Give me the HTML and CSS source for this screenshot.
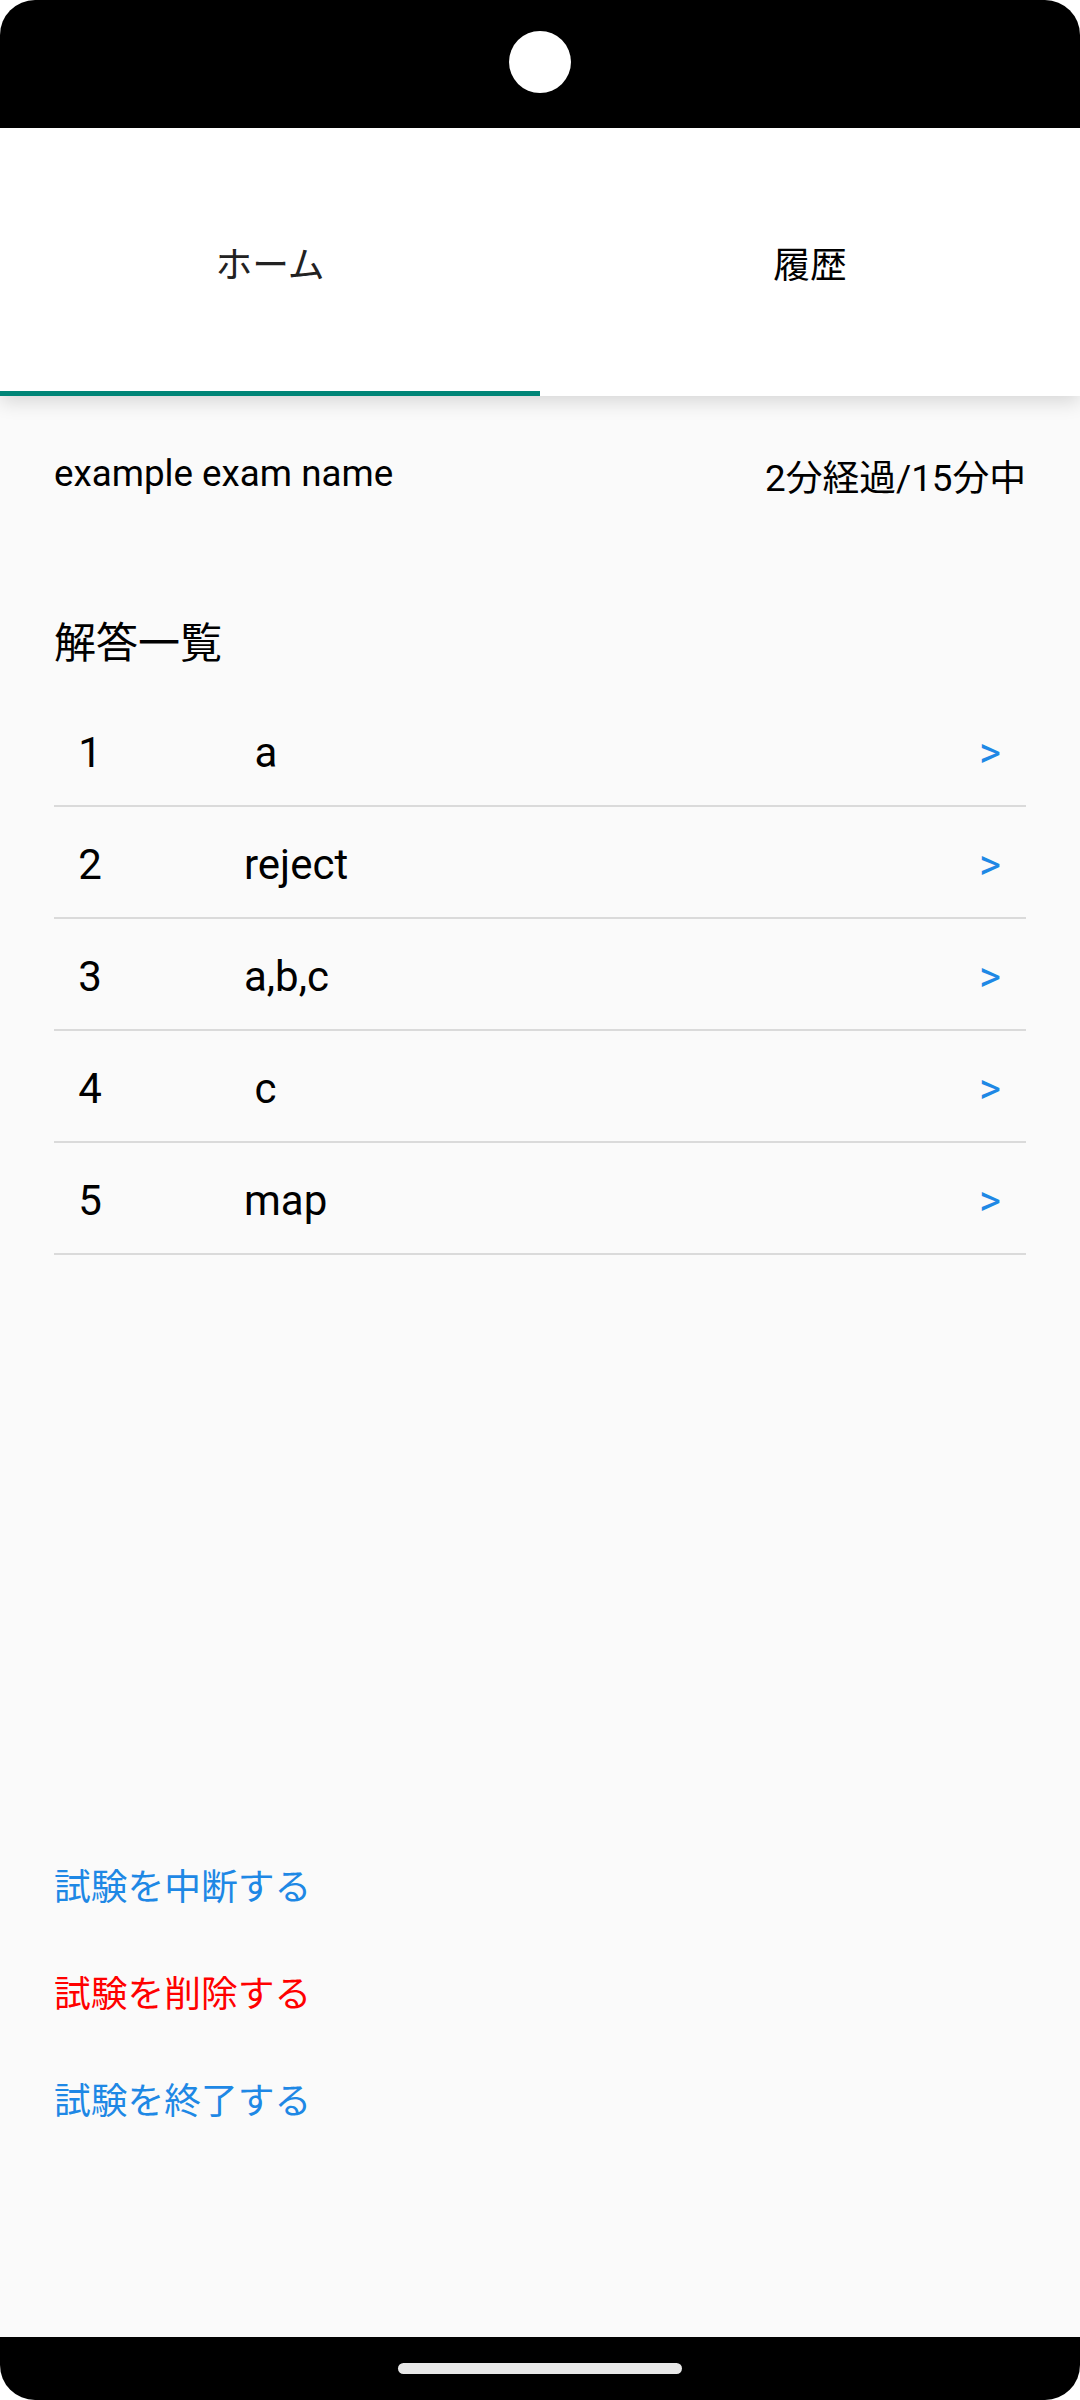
FILE: index.html
```html
<!DOCTYPE html>
<html lang="ja">
<head>
<meta charset="utf-8">
<title>試験</title>
<link rel="stylesheet" href="styles.css">
</head>
<body>
<div class="phone">
  <div class="statusbar"><div class="camera"></div></div>
  <nav class="tabs">
    <div class="tab tab-active">ホーム</div>
    <div class="tab">履歴</div>
  </nav>
  <main class="content">
    <div class="exam-row">
      <span class="exam-name">example exam name</span>
      <span class="exam-time">2分経過/15分中</span>
    </div>
    <h2 class="heading">解答一覧</h2>
    <ul class="answers">
      <li class="row"><span class="num">1</span><span class="ans"> a</span><span class="chev">&gt;</span></li>
      <li class="row"><span class="num">2</span><span class="ans">reject</span><span class="chev">&gt;</span></li>
      <li class="row"><span class="num">3</span><span class="ans">a,b,c</span><span class="chev">&gt;</span></li>
      <li class="row"><span class="num">4</span><span class="ans"> c</span><span class="chev">&gt;</span></li>
      <li class="row"><span class="num">5</span><span class="ans">map</span><span class="chev">&gt;</span></li>
    </ul>
    <div class="actions">
      <a class="action">試験を中断する</a>
      <a class="action action-danger">試験を削除する</a>
      <a class="action">試験を終了する</a>
    </div>
  </main>
  <div class="navbar"><div class="pill"></div></div>
</div>
</body>
</html>
```
FILE: styles.css
```css
* { box-sizing: border-box; }
html, body {
  margin: 0;
  padding: 0;
  background: #ffffff;
}
body {
  font-family: Roboto, "Noto Sans CJK JP", sans-serif;
  color: #000;
}
.phone {
  width: 1080px;
  height: 2400px;
  display: flex;
  flex-direction: column;
  overflow: hidden;
}
.statusbar {
  height: 128px;
  flex: 0 0 128px;
  background: #000;
  border-radius: 35px 35px 0 0;
  display: flex;
  justify-content: center;
  padding-top: 31px;
}
.camera {
  width: 62px;
  height: 62px;
  border-radius: 50%;
  background: #fff;
}
.tabs {
  flex: 0 0 268px;
  height: 268px;
  display: flex;
  background: #fff;
  position: relative;
  z-index: 2;
  box-shadow: 0 6px 18px rgba(0, 0, 0, 0.14);
}
.tab {
  flex: 1;
  display: flex;
  align-items: center;
  justify-content: center;
  padding-top: 7px;
  font-size: 36.75px;
  line-height: 50px;
  color: #000;
  position: relative;
}
.tab-active { color: #222; }
.tab-active::after {
  content: "";
  position: absolute;
  left: 0;
  right: 0;
  bottom: 0;
  height: 5px;
  background: #008577;
}
.content {
  flex: 1;
  background: #fafafa;
  padding: 53px 54px 210px;
  display: flex;
  flex-direction: column;
}
.exam-row {
  display: flex;
  justify-content: space-between;
  align-items: flex-start;
  font-size: 36.75px;
  line-height: 50px;
}
.exam-time { margin-top: 5px; }
.heading {
  margin: 115px 0 0;
  font-size: 42px;
  font-weight: 400;
  line-height: 50px;
}
.answers {
  list-style: none;
  margin: 26px 0 0;
  padding: 0;
}
.row {
  height: 112px;
  display: flex;
  align-items: center;
  padding-top: 5px;
  border-bottom: 2px solid #dadada;
  font-size: 42px;
  line-height: 50px;
}
.num {
  width: 72px;
  text-align: center;
}
.ans {
  flex: 1;
  margin-left: 118px;
  white-space: pre;
}
.chev {
  width: 72px;
  text-align: center;
  color: #1e88e5;
}
.actions {
  margin-top: auto;
  display: flex;
  flex-direction: column;
  gap: 57px;
}
.action {
  font-size: 36.75px;
  line-height: 50px;
  color: #1e88e5;
}
.action-danger { color: #ff0000; }
.navbar {
  flex: 0 0 63px;
  height: 63px;
  background: #000;
  border-radius: 0 0 35px 35px;
  display: flex;
  justify-content: center;
  padding-top: 26px;
}
.pill {
  width: 284px;
  height: 11px;
  border-radius: 6px;
  background: #e8e8e8;
}
```
